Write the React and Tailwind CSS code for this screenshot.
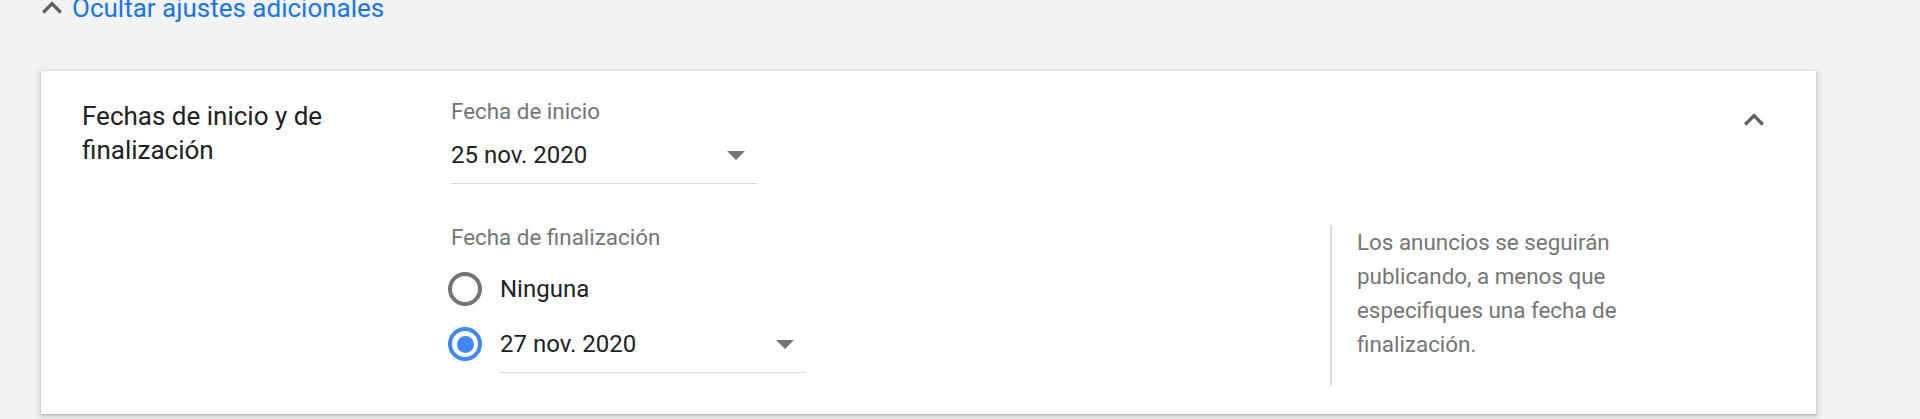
import React, { useState } from 'react';

// Caret used by the collapsible header and the section toggle
function ChevronUp({ className }) {
  return (
    <svg viewBox="0 0 24 24" className={className} fill="currentColor">
      <path d="M12 8l-6 6 1.41 1.41L12 10.83l4.59 4.58L18 14z" />
    </svg>
  );
}

function DropArrow() {
  return (
    <svg viewBox="0 0 10 5" className="w-[18px] h-[9px] mr-[12px] text-[#757575]" fill="currentColor">
      <path d="M0 0l5 5 5-5z" />
    </svg>
  );
}

function DateField({ value }) {
  return (
    <div className="w-[306px] pb-[14px] border-b border-[#dcdcdc] flex items-center justify-between">
      <span className="text-[24px] leading-[28px] text-[#202124]">{value}</span>
      <DropArrow />
    </div>
  );
}

function Radio({ checked, onClick }) {
  return (
    <button
      onClick={onClick}
      className={`w-[34px] h-[34px] rounded-full border-[4px] flex items-center justify-center shrink-0 ${
        checked ? 'border-[#4285f4]' : 'border-[#757575]'
      }`}
    >
      {checked && <span className="w-[17px] h-[17px] rounded-full bg-[#4285f4]" />}
    </button>
  );
}

export default function App() {
  const [endMode, setEndMode] = useState('date');

  return (
    <div className="min-h-[419px] bg-[#f1f3f4] font-['Roboto',_sans-serif] overflow-hidden">
      {/* Toggle for extra settings */}
      <div className="-mt-[11px] h-[38px] flex items-center pl-[32px]">
        <ChevronUp className="w-[40px] h-[40px] text-[#5f6368]" />
        <span className="text-[26px] leading-[30px] text-[#1a73e8]">Ocultar ajustes adicionales</span>
      </div>

      {/* Start / end date card */}
      <div className="mt-[44px] ml-[41px] w-[1775px] bg-white flex pt-[28px] pb-[28px] pl-[41px] shadow-[0_1px_2px_0_rgba(60,64,67,0.3),0_2px_6px_2px_rgba(60,64,67,0.15)]">
        <div className="w-[369px] shrink-0">
          <h3 className="max-w-[300px] text-[26px] leading-[34px] text-[#202124]">
            Fechas de inicio y de finalización
          </h3>
        </div>

        <div className="flex-1">
          <div className="text-[22.4px] leading-[24px] text-[#757575]">Fecha de inicio</div>
          <div className="mt-[18px]">
            <DateField value="25 nov. 2020" />
          </div>

          <div className="mt-[41px] flex">
            <div className="w-[879px] shrink-0 pb-[13px]">
              <div className="text-[22.4px] leading-[24px] text-[#757575]">Fecha de finalización</div>
              <div className="mt-[23px] flex items-center gap-[18px] -ml-[3px]">
                <Radio checked={endMode === 'none'} onClick={() => setEndMode('none')} />
                <span className="text-[24px] leading-[28px] text-[#202124]">Ninguna</span>
              </div>
              <div className="mt-[24px] flex items-start gap-[18px] -ml-[3px]">
                <div className="h-[28px] flex items-center">
                  <Radio checked={endMode === 'date'} onClick={() => setEndMode('date')} />
                </div>
                <DateField value="27 nov. 2020" />
              </div>
            </div>
            <div className="border-l-2 border-[#dadce0] pl-[25px]">
              <p className="w-[280px] text-[22.4px] leading-[34px] text-[#757575]">
                Los anuncios se seguirán publicando, a menos que especifiques una fecha de finalización.
              </p>
            </div>
          </div>
        </div>

        <div className="w-[38px] mr-[44px] mt-[1px]">
          <ChevronUp className="w-[40px] h-[40px] text-[#5f6368]" />
        </div>
      </div>
    </div>
  );
}
